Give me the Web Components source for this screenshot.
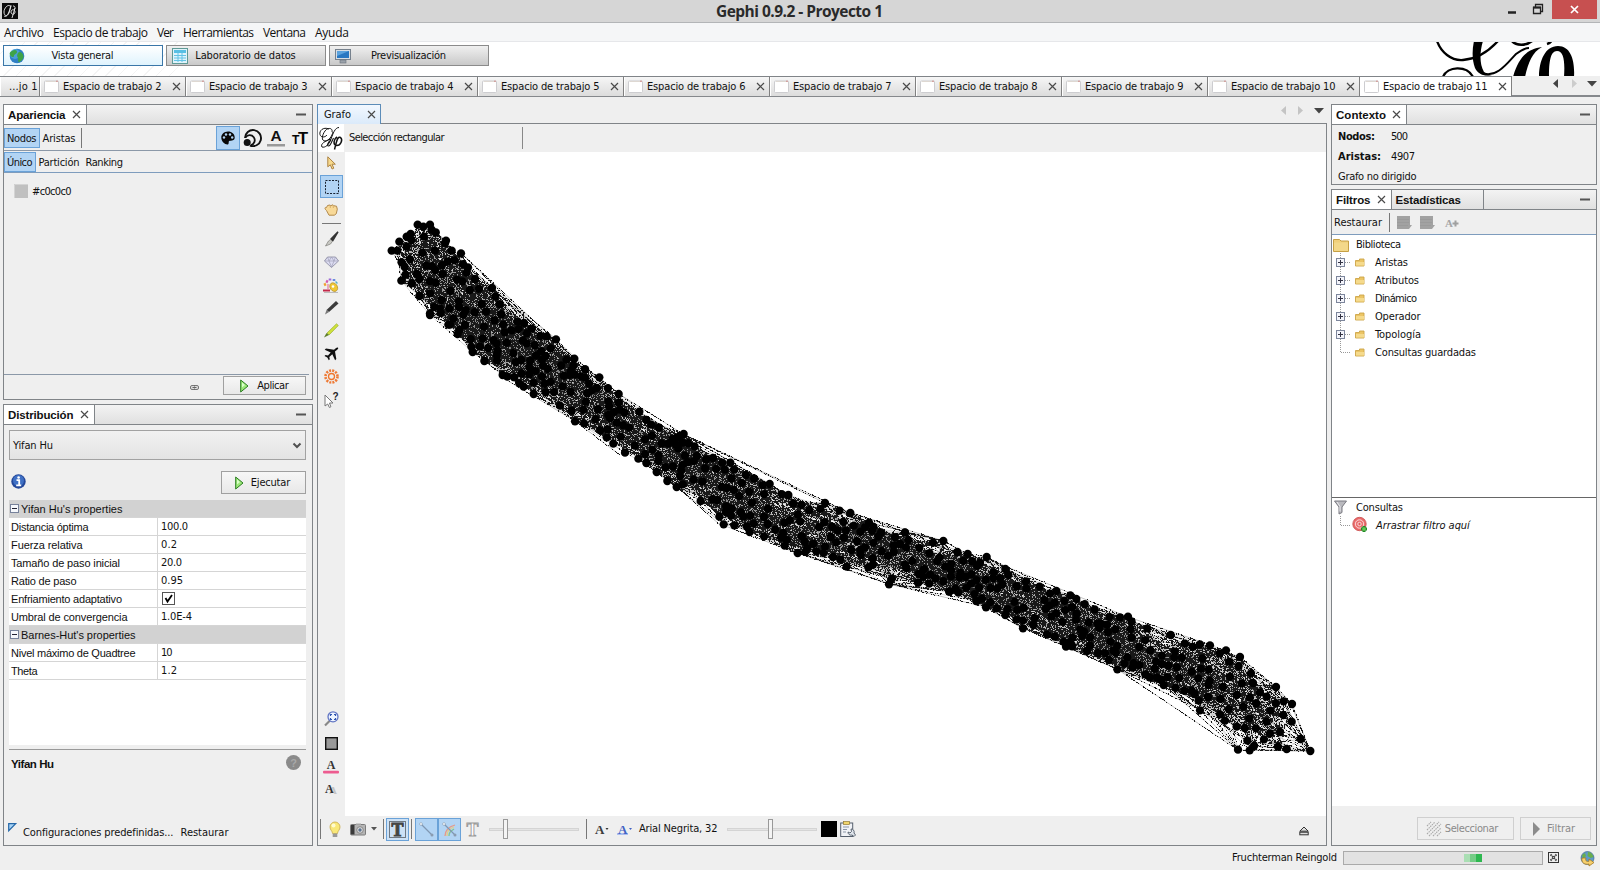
<!DOCTYPE html>
<html lang="es">
<head>
<meta charset="utf-8">
<title>Gephi 0.9.2 - Proyecto 1</title>
<style>
html,body{margin:0;padding:0;width:1600px;height:870px;overflow:hidden;background:#efefef}
</style>
</head>
<body>
<gephi-app></gephi-app>
<script>
const FONTS={
  t:'11px "DejaVu Sans Condensed","DejaVu Sans",sans-serif',
  tb:'bold 11px "DejaVu Sans Condensed","DejaVu Sans",sans-serif',
  ti:'italic 11px "DejaVu Sans Condensed","DejaVu Sans",sans-serif',
  s:'12px "Open Sans","Noto Sans",sans-serif',
  sb:'700 15.5px "Open Sans","Noto Sans",sans-serif',
  a:'11px "Liberation Sans",Arial,sans-serif',
  ab:'bold 11.5px "Liberation Sans",Arial,sans-serif'
};
const ruler=document.createElement('canvas').getContext('2d');
const define=(name,css,html,extra)=>{
  const t=document.createElement('template');
  t.innerHTML=`<style>:host{display:block;box-sizing:border-box}*{box-sizing:border-box}${css}</style>${html}`;
  customElements.define(name,class extends HTMLElement{
    constructor(){super();this.attachShadow({mode:'open'}).append(t.content.cloneNode(true));}
    connectedCallback(){if(extra)extra(this,this.shadowRoot);}
  });
};

/* Label whose tracking is tuned so that it occupies w pixels. */
define('ui-text',':host{display:block;white-space:pre;line-height:14px;color:#111;flex:none}','<slot></slot>',(h)=>{
  const f=FONTS[h.getAttribute('f')||'t'],s=h.textContent,w=+h.getAttribute('w');
  h.style.font=f;h.style.lineHeight=h.getAttribute('lh')||'14px';
  if(w){ruler.font=f;h.style.letterSpacing=((w-ruler.measureText(s).width)/(s.length-1||1)).toFixed(3)+'px';h.style.width=w+1+'px';}
});

const ICONS={
  app:[16,16,`<rect width="16" height="16" fill="#0c0c0c"/><path d="M8 3C6 1 2 5 2 9s3 5 5 1l2-7M2 13c3 2 5-3 7-11M9 9c0-3 4-3 4 0s-4 3-4 0M13 5l-3 10M11 3c3 0 2 3 1 4" fill="none" stroke="#eee" stroke-width=".9"/>`],
  logo:[25,25,`<path d="M13 6c1-4-4-5-7-1S2 15 6 15c4 0 7-5 8-9M10 3C4 .5 0 5 1 8.500s5 3 7 .5M20 1.500c-4 0-6 6-8 11.500-2 6-6 9-9 8-2-3 3-6 9-8" fill="none" stroke="#111" stroke-width="1"/><path d="M14.500 12c-2.500 5-3 8-5 8s-.5-4 2.500-6" fill="none" stroke="#111" stroke-width="1.100"/><path d="M18 11c-3.500 2-4 7.500-1 8.500 5 .5 7-6 4.500-8-3-1.500-4 4-6 12" fill="none" stroke="#111" stroke-width="1.500"/>`],
  globe:[16,16,`<circle cx="8" cy="8" r="7.300" fill="#2f7fc4"/><circle cx="6" cy="6" r="5" fill="#5db2e8" opacity=".6"/><path d="M3 3c3-2 5-1 5 1s-3 2-3 4-3 1-4-1 0-3 2-4zM10 4c3 0 4 2 4.500 4s-2 5-4 6-1-4-2-5 0-4 1.500-5z" fill="#3ea347"/>`],
  table:[16,16,`<rect x=".5" y=".5" width="15" height="15" fill="#dff3fb" stroke="#5f9a96"/><rect x="2" y="2" width="12" height="3" fill="#58bfe4"/><path d="M2 7.500h12M2 10h12M2 12.500h12M6 5v9M10 5v9" stroke="#63c3e6"/>`],
  monitor:[16,16,`<rect x=".5" y="1.500" width="15" height="10" fill="#d7dde4" stroke="#76818d"/><rect x="2" y="3" width="12" height="7" fill="#2877c2"/><path d="M2 3h12l-12 5z" fill="#5ba2dd"/><rect x="5" y="12" width="6" height="3" fill="#9aa2aa" stroke="#68717b" stroke-width=".6"/>`],
  doc:[15,13,`<rect x=".5" y="1" width="14" height="11.500" rx="1" fill="#fff" stroke="#cdcdd0"/><path d="M2 1.500h11" stroke="#ded8d2"/><path d="M12 1.200h2" stroke="#c88"/>`],
  x:[9,9,`<path d="M1 1l7 7M8 1l-7 7" stroke="#4a4a4a" stroke-width="1.200" fill="none"/>`],
  min:[10,3,`<rect y=".5" width="10" height="2" fill="#555"/>`],
  left:[5,9,`<path d="M5 0v9L0 4.500z" fill="currentColor"/>`],
  right:[5,9,`<path d="M0 0v9l5-4.500z" fill="currentColor"/>`],
  down:[10,6,`<path d="M0 0h10L5 5.500z" fill="currentColor"/>`],
  sdown:[6,4,`<path d="M0 0h6L3 3.500z" fill="#555"/>`],
  palette:[14,14,`<path d="M7 .5C3 .5.300 3.300.300 6.500c0 4 3.500 7 6 7 1.800 0 1.200-2 1.500-3 .5-1.600 5.900.500 5.900-4C13.700 3 10.800.500 7 .500z" fill="#080808"/><g fill="#b2d4f4"><circle cx="3" cy="6.500" r="1.200"/><circle cx="5" cy="3.500" r="1.200"/><circle cx="9" cy="3.500" r="1.200"/><circle cx="11.200" cy="6.500" r="1.200"/></g>`],
  circles:[18,18,`<path d="M2 9a8 8 0 1 1 5 7.500" fill="none" stroke="#111" stroke-width="1.900"/><path d="M2.500 8.500a5 5 0 1 1 5.500 7.500" fill="none" stroke="#111" stroke-width="1.800"/><circle cx="4.200" cy="13.500" r="3.500" fill="#111"/>`],
  acolor:[18,18,`<text x="9" y="12" text-anchor="middle" font-family="Liberation Sans" font-weight="bold" font-size="15.500" fill="#111">A</text><rect y="15" width="18" height="2.500" fill="#999"/>`],
  tt:[17,14,`<text x="0" y="12.500" font-family="Liberation Sans" font-weight="bold" font-size="12" fill="#050505">T</text><text x="6" y="12.500" font-family="Liberation Sans" font-weight="bold" font-size="16.500" fill="#050505">T</text>`],
  swatch:[14,14,`<rect width="14" height="14" fill="#c0c0c0"/><path d="M.5 14V.5H14" stroke="#d4d4d4" fill="none"/>`],
  chain:[9,5,`<rect x=".5" y=".5" width="8" height="4" rx="1.500" fill="#ddd" stroke="#777"/><path d="M2.500 2.500h4M4.500 .5v1M4.500 3.500v1" stroke="#666"/>`],
  play:[9,14,`<path d="M.7 1v12L8 7z" fill="#9be878" stroke="#2b7d20"/><path d="M2 3.500v5L5 6z" fill="#d9ffc9"/>`],
  gplay:[9,14,`<path d="M1 0v14l7-7z" fill="#8c8c8c"/>`],
  chev:[8,7,`<path d="M.5 1.500L4 5l3.500-3.500" fill="none" stroke="#505050" stroke-width="2"/>`],
  info:[15,15,`<circle cx="7.500" cy="7.500" r="7.200" fill="#24489a"/><circle cx="7.500" cy="6.500" r="5.500" fill="#3f70c4"/><path d="M5.500 6.200h2.700v5M5.200 11.400h5" stroke="#fff" stroke-width="1.800" fill="none"/><circle cx="7.600" cy="3.500" r="1.300" fill="#fff"/>`],
  help:[15,15,`<circle cx="7.500" cy="7.500" r="7.500" fill="#8a8a8a"/><text x="7.500" y="11.500" text-anchor="middle" font-family="Liberation Sans" font-weight="bold" font-size="11" fill="#a8a8a8">?</text>`],
  tri:[9,9,`<path d="M.7.700h7l-7 7z" fill="#a9d4f7" stroke="#2467a8" stroke-width="1.200"/>`],
  minus:[9,9,`<rect x=".5" y=".5" width="8" height="8" fill="#f6f8fc" stroke="#77829b"/><path d="M2 4.500h5" stroke="#223"/>`],
  plus:[9,9,`<rect x=".5" y=".5" width="8" height="8" fill="#f3f4fa" stroke="#7d869c"/><path d="M2 4.500h5M4.500 2v5" stroke="#334"/>`],
  check:[13,13,`<rect x=".5" y=".5" width="12" height="12" fill="#fff" stroke="#555"/><path d="M3.500 6l2 3.500L10 3" fill="none" stroke="#000" stroke-width="1.800"/>`],
  arrow:[9,14,`<path d="M.8.800v10l2.500-2 1.800 4.200 1.700-.8L5 8.200h3.300z" fill="#f7d98d" stroke="#ad8444"/>`],
  rect:[14,14,`<rect x=".5" y=".5" width="13" height="13" fill="none" stroke="#182230" stroke-dasharray="2 1.250"/>`],
  hand:[14,12,`<path d="M2.500 6.500C.5 5 .5 3 2.500 3.500L3.500 1.500 6 1l.8.7L9 .8l1 1 2.500.4 .8 3-1 4.500-2 1.500H5z" fill="#f8d998" stroke="#b38a4c"/><path d="M6.300 2v2M9.300 2v2" stroke="#c99e57" stroke-width=".7"/>`],
  brush:[15,16,`<path d="M14 .8L7 8l1.800 1.600z" fill="#333" stroke="#333" stroke-width="1.400"/><path d="M6.500 8.500l-2 1.500-3 5 5-2 1.800-2.500z" fill="#c9c9c4" stroke="#7c7c78" stroke-width=".7"/>`],
  gem:[15,12,`<path d="M3.500 1h8L14.500 5l-7 6.500-7-6.500z" fill="#dcdcf2" stroke="#85859c" stroke-width=".8"/><path d="M.5 5h14M3.500 1L5 5l2.500 6L10 5l1.500-4M5 5l2.500-4L10 5" fill="none" stroke="#a0a0b8" stroke-width=".7"/>`],
  paint:[16,16,`<g stroke-width="2.600" fill="none"><path d="M1 8l2-1" stroke="#f0a030"/><path d="M3 4l2 1" stroke="#d25bb0"/><path d="M7 1.500v2" stroke="#9e6ad8"/><path d="M11 2v2" stroke="#6a8ce0"/><path d="M14 5l-1 1" stroke="#58b0c8"/></g><ellipse cx="10.500" cy="10.500" rx="3.600" ry="4.600" transform="rotate(-35 10 10)" fill="#f0c733" stroke="#b2902e" stroke-width=".7"/><circle cx="10" cy="9.500" r="1.300" fill="#fff"/><path d="M5 7v5" stroke="#e88fb0" stroke-width="1.500"/><path d="M0 13.500h7" stroke="#c22849" stroke-width="2"/><path d="M1 15.500h14" stroke="#bbb"/>`],
  pencil:[15,16,`<path d="M12 1l2.500 2.500L5 12l-2.500-2z" fill="#3c3c3c"/><path d="M2.500 10L1 14.500 5 12z" fill="#777"/>`],
  hl:[16,16,`<path d="M13.500 .8L15.300 2.500 6 12l-2-2z" fill="#cfe23c" stroke="#8da21c" stroke-width=".6"/><path d="M3.500 10L1 14.500 6 12z" fill="#5d7e2a"/>`],
  plane:[15,14,`<path d="M14 .7c-1-.8-2.500.6-4 2L2 1.500.7 2.700l6 2.800L4 8.500 1.500 8l-1 1 2.800 1.500 1.500 2.800 1-1-.5-2.300 3-2.800 2.800 6 1.200-1.200L11 4.500c1.500-1.500 4-3 3-3.800z" fill="#111"/>`],
  sun:[15,15,`<circle cx="7.500" cy="7.500" r="3" fill="none" stroke="#f0762c" stroke-width="1.300"/><circle cx="7.500" cy="7.500" r="6" fill="none" stroke="#ee7a35" stroke-width="2.600" stroke-dasharray="2 1.140"/>`],
  ask:[15,16,`<path d="M1 3v11l2.700-2 1.700 3.500 1.500-.7L5.500 11H9z" fill="#fff" stroke="#777"/><text x="8.500" y="8" font-family="Liberation Sans" font-weight="bold" font-size="10" fill="#222">?</text>`],
  mag:[15,16,`<path d="M6.500 9l-5.500 5.500" stroke="#888" stroke-width="2.200"/><circle cx="9" cy="5.800" r="5" fill="#eef4ff" stroke="#6276c4" stroke-width="1.300"/><path d="M6.500 5V3.500h1.500M10 3.500h1.500V5M11.500 7v1.500H10M8 8.500H6.500V7" fill="none" stroke="#2f55b0" stroke-width="1.200"/>`],
  gray:[13,13,`<rect x=".7" y=".7" width="11.600" height="11.600" fill="#999" stroke="#111" stroke-width="1.400"/>`],
  apink:[16,14,`<text x="8" y="9" text-anchor="middle" font-family="Liberation Serif" font-weight="bold" font-size="12" fill="#333">A</text><rect x="0" y="10.800" width="16" height="2.700" rx="1" fill="#ed5c90"/>`],
  ash:[13,12,`<text x="4" y="10" font-family="Liberation Serif" font-weight="bold" font-size="11" fill="#c4c4c4">A</text><text x="0" y="9" font-family="Liberation Serif" font-weight="bold" font-size="12" fill="#333">A</text>`],
  bulb:[12,17,`<path d="M6 1a5 5 0 0 0-5 5c0 3 2.500 4 2.500 6.500h5C8.500 10 11 9 11 6a5 5 0 0 0-5-5z" fill="#f9e878" stroke="#c8a94a" stroke-width=".8"/><circle cx="4.500" cy="4.500" r="2" fill="#fffbd0"/><rect x="3.700" y="12.500" width="4.600" height="3.500" fill="#999"/>`],
  cam:[16,13,`<rect x=".5" y="1.500" width="15" height="10.500" rx="1" fill="#b5b5b5" stroke="#7c7c7c"/><rect x="1" y="2" width="3.500" height="9.500" fill="#3a3a3a"/><circle cx="10" cy="7" r="3.300" fill="#ddd" stroke="#888"/><circle cx="10" cy="7" r="1.700" fill="#5c7390"/><rect x="6" y="0" width="5" height="1.500" fill="#ccc"/>`],
  bigT:[17,17,`<rect x=".5" y=".5" width="16" height="16" fill="#cde1f5" stroke="#111" stroke-dasharray="1 1"/><text x="8.500" y="14.500" text-anchor="middle" font-family="Liberation Serif" font-weight="bold" font-size="18" fill="#444" stroke="#444">T</text>`],
  edge:[15,15,`<path d="M2 2l11 11" stroke="#8097b2" stroke-width="1.200"/><circle cx="2" cy="2" r="1.400" fill="#fff" stroke="#7e93ab" stroke-width=".6"/><circle cx="13" cy="13" r="1.500" fill="#8a9bb0"/>`],
  edgec:[15,15,`<path d="M3 14c0-5 3-9 10-11" stroke="#e59a8c" stroke-width="1.300" fill="none"/><path d="M5 14c0-5 2-7 7-9" stroke="#e3cf86" stroke-width="1.300" fill="none"/><path d="M7 14c0-4 2-5 5-7" stroke="#7fc596" stroke-width="1.300" fill="none"/><path d="M2 2l11 11" stroke="#8097b2" stroke-width="1.200"/><circle cx="2" cy="2" r="1.400" fill="#fff" stroke="#7e93ab" stroke-width=".6"/><circle cx="13" cy="13" r="1.500" fill="#8a9bb0"/>`],
  outT:[15,17,`<text x="7.500" y="14.500" text-anchor="middle" font-family="Liberation Serif" font-weight="bold" font-size="18" fill="#fff" stroke="#9b9b9b" stroke-width=".9">T</text>`],
  aBlk:[14,15,`<text x="0" y="12" font-family="Liberation Serif" font-weight="bold" font-size="13" fill="#3c3c3c">A</text><path d="M10.500 6h3l-1.500 2z" fill="#333"/>`],
  aBlu:[16,15,`<rect x="0" y="11" width="11" height="2" fill="#a9bdf0"/><text x="1" y="12" font-family="Liberation Serif" font-weight="bold" font-size="13" fill="#4263c4">A</text><path d="M12 6h3l-1.500 2z" fill="#4263c4"/>`],
  clip:[16,17,`<rect x=".7" y="2" width="12" height="13.500" fill="#f0f2f6" stroke="#555f6d"/><rect x="3.500" y=".6" width="6" height="3" fill="#f0d56c" stroke="#937b33" stroke-width=".7"/><path d="M3 6h6M3 8.500h4M3 11h3" stroke="#8c97a6"/><path d="M11 8a3 3 0 0 1 3 4l1.500 2-1.500 1.500-2-1.500a3 3 0 0 1-4-3l2 1 1.500-1.500z" fill="#dfe5ec" stroke="#4f5966" stroke-width=".9"/>`],
  eject:[10,10,`<path d="M5 1l4.200 4.200H.8z" fill="#ddd" stroke="#333"/><rect x=".8" y="6.200" width="8.400" height="2.600" fill="#ddd" stroke="#333"/>`],
  fold:[16,14,`<path d="M.5 1.500h6l1.500 1.500h7.500v10.500H.5z" fill="#f0cf7b" stroke="#c6a044"/><path d="M1 4.500h14v8.500H1z" fill="#f3d88a"/>`],
  sfold:[10,9,`<path d="M.5 2.500h4v-1.500h4.500v7H.5z" fill="#ecc565" stroke="#cda548" stroke-width=".9"/><path d="M1 4h8v3.500H1z" fill="#f5da8c"/>`],
  funnel:[13,15,`<path d="M.5 1h12L8 7v5.500L5 14V7z" fill="#b9b9be" stroke="#7b7b82"/><path d="M3 2l3 4.500v5" stroke="#ececf0" fill="none"/>`],
  target:[16,16,`<circle cx="7.500" cy="7" r="6.700" fill="#ea6a6a" stroke="#c94b4b" stroke-width=".8"/><circle cx="7.500" cy="7" r="4.200" fill="#ea7070" stroke="#fbe3e3" stroke-width=".9"/><circle cx="7.500" cy="7" r="1.700" fill="#e05a5a" stroke="#fbe3e3" stroke-width=".9"/><path d="M12 9v6M9 12h6" stroke="#208c24" stroke-width="3"/><path d="M12 10v4M10 12h4" stroke="#7ddc6a" stroke-width="1"/>`],
  blk1:[16,14,`<path d="M0 0h13v9h2l-3 4H0z" fill="#a2a2a2"/><path d="M0 3.500h12M0 6.500h12M0 9.500h11" stroke="#979797" stroke-width=".6"/>`],
  aplus:[14,12,`<text x="0" y="10" font-family="Liberation Serif" font-weight="bold" font-size="11" fill="#a5a5a5">A</text><path d="M10.500 3.500v6M7.500 6.500h6" stroke="#a0a0a0" stroke-width="2"/>`],
  hatch:[14,14,`<path d="M0 4l4-4M0 8l8-8M0 12l12-12M2 14L14 2M6 14l8-8M10 14l4-4" stroke="#a9a9a9" stroke-width="1.100" stroke-dasharray="1.500 .8"/>`],
  cancel:[11,11,`<rect x=".5" y=".5" width="10" height="10" fill="#eee" stroke="#333"/><path d="M2.500 2.500l6 6M8.500 2.500l-6 6" stroke="#444" stroke-width="1.800" stroke-dasharray="1.600 .7"/>`],
  world:[15,16,`<circle cx="7.500" cy="7" r="6.500" fill="#5e9ac8" stroke="#41688c" stroke-width=".7"/><path d="M8 1c3 0 5 3 5.500 5l-3 1-3-2zM2 4l3-2 1 3-3 3z" fill="#69ae4d"/><path d="M2 7c-1 5 3 7 7 6v2l5-3.500-5-3.500v2.200C6 11 5 9 6 7z" fill="#f6cf6d" stroke="#a57a26" stroke-width=".8"/>`],
  brand:[140,34,`<g transform="translate(-1435 -42)" fill="none" stroke="#000"><path d="M1437 41c4 11 14 20 26 19 14-1 25-8 35-19" stroke-width="2.300"/><path d="M1474 41h9c-3 10-4 22 1 31 2 2 5 3 8 3-8 2-14-1-17-7-3-8-3-18-1-27z" fill="#000" stroke="none"/><path d="M1482 73c15 6 27-12 34-19 4-3 8-6 13-6" stroke-width="2"/><path d="M1512 41c4 5 14 5 20 0M1547 44c3-1 4-2 5-4" stroke-width="2.600"/><path d="M1443 77c4-11 24-12 30 0" stroke-width="2.300"/><path d="M1542 47c-14 2-23 9-29 30h12c3-13 7-25 17-30z" fill="#000" stroke="none"/><path d="M1539 77c0-16 6-31 19-31 13 0 17 15 16 31h-10c1-15 0-26-7-26s-8 12-8 26z" fill="#000" stroke="none"/></g>`]
};
define('ui-icon',':host{display:block;flex:none}svg{display:block;overflow:visible}','<div></div>',(h,r)=>{
  const [w,hh,s]=ICONS[h.getAttribute('n')];
  r.querySelector('div').innerHTML=`<svg width="${w}" height="${hh}" viewBox="0 0 ${w} ${hh}">${s}</svg>`;
});

define('window-title',`:host{height:23px;background:#d6d6d6;border-bottom:1px solid #b3b5b7;display:grid;grid-template-columns:1fr auto 1fr;align-items:center;padding:0 2px}
 .c{display:flex;justify-content:flex-end;align-self:start;height:19px;align-items:center}
 .close{width:45px;height:19px;background:#c75050;display:grid;place-items:center;margin-right:1px}svg{display:block}`,
`<ui-icon n="app"></ui-icon><ui-text f="sb" w="167" lh="22px" style="color:#2a2a2a">Gephi 0.9.2 - Proyecto 1</ui-text><div class="c">
<svg width="60" height="19"><path d="M16 12.500h8" stroke="#222" stroke-width="2.500"/><path d="M41.500 7.500h7v6h-7zM43.500 7v-2.500h7v7h-2" fill="none" stroke="#222" stroke-width="1.300"/><path d="M41 7.500h8" stroke="#222" stroke-width="2"/></svg>
<div class="close"><svg width="9" height="9"><path d="M1 1l7 7M8 1l-7 7" stroke="#fff" stroke-width="1.700"/></svg></div></div>`);

define('menu-bar',':host{height:19px;background:#f5f6f7;border-bottom:1px solid #e6e7ea;display:flex;gap:8px;padding:2px 4px 0;align-items:center}',
`<ui-text f="s" w="40">Archivo</ui-text><ui-text f="s" w="95">Espacio de trabajo</ui-text><ui-text f="s" w="17">Ver</ui-text><ui-text f="s" w="71">Herramientas</ui-text><ui-text f="s" w="43">Ventana</ui-text><ui-text f="s" w="34">Ayuda</ui-text>`);

define('mode-button',`:host{width:160px;height:21px;border:1px solid #8b8b8b;background:linear-gradient(#f0f0f0,#c9c9c9);display:flex;align-items:center;padding-left:5px}
 :host([on]){border-color:#3a76a8;background:linear-gradient(#fff,#dff3fd)} .c{flex:1;display:flex;justify-content:center;padding-right:21px}`,
 `<span class="i"></span><div class="c"><slot></slot></div>`,
 (h,r)=>{r.querySelector('.i').innerHTML=`<ui-icon n="${h.getAttribute('icon')}"></ui-icon>`;});

define('mode-bar',`:host{height:34px;display:flex;gap:3px;padding:3px 25px 0 3px;background:repeating-linear-gradient(135deg,transparent 0 8px,#f4f4f4 8px 9px) 0 0/180px 34px no-repeat,#fff}
 .fade{margin-left:auto;margin-top:-3px;height:34px;overflow:hidden}`,
`<mode-button on icon="globe"><ui-text w="62">Vista general</ui-text></mode-button><mode-button icon="table"><ui-text w="100.500">Laboratorio de datos</ui-text></mode-button><mode-button icon="monitor"><ui-text w="75">Previsualización</ui-text></mode-button><ui-icon class="fade" n="brand"></ui-icon>`);

define('workspace-tab',`:host{height:19px;width:146px;flex:none;display:flex;align-items:center;border-right:1px solid #808080;background:linear-gradient(#f6f6f6,#dcdcdc);padding-left:4px;box-shadow:inset 1px 0 #fff}
 :host([wide]){width:152px}:host([on]){background:#fff}:host([cut]){width:40px;padding-left:9px;overflow:hidden}:host([cut]) ui-icon{display:none}
 ui-text{margin-left:4px;margin-right:9.500px}:host([cut]) ui-text{margin-left:0}`,
`<ui-icon n="doc"></ui-icon><slot></slot><ui-icon n="x"></ui-icon>`,
(h,r)=>{const t=document.createElement('ui-text');t.textContent=h.getAttribute('label');t.setAttribute('w',h.getAttribute('w')||98.5);r.querySelector('slot').replaceWith(t);});

define('workspace-tabs',`:host{height:21px;display:flex;border-top:1px solid #808488;border-bottom:2px solid #85888c;background:#efefef}
 .nav{flex:1;margin-top:-1px;background:#efefef;display:flex;align-items:center;height:15px;padding-left:41px;color:#444}.nav ui-icon+ui-icon{margin-left:14px}.nav .d{color:#ccc}.nav .d+ui-icon{margin-left:10px}`,
`<workspace-tab cut label="...jo 1" w="28.500"></workspace-tab>${[2,3,4,5,6,7,8,9].map(i=>`<workspace-tab label="Espacio de trabajo ${i}"></workspace-tab>`).join('')}<workspace-tab wide label="Espacio de trabajo 10" w="104.500"></workspace-tab><workspace-tab wide on label="Espacio de trabajo 11" w="104.500"></workspace-tab><div class="nav"><ui-icon n="left"></ui-icon><ui-icon class="d" n="right"></ui-icon><ui-icon n="down"></ui-icon></div>`);

define('dock-panel',`:host{display:flex;flex-direction:column;border:1px solid #808488;background:#efefef;min-height:0}
 header{height:20px;flex:none;display:flex;border-bottom:1px solid #808488;background:linear-gradient(#f3f3f3,#e0e0e0);padding-right:6px}
 .m{margin-left:auto;align-self:center}.b{flex:1;display:flex;flex-direction:column;min-height:0}`,
`<header><slot name="tab"></slot><ui-icon class="m" n="min"></ui-icon></header><div class="b"><slot></slot></div>`);
define('dock-tab',`:host{display:flex;height:19px;align-items:center;gap:5px;padding:1px 5px 0 4px;border-right:1px solid #808488;background:#fff}:host([off]){background:none}:host([off]) ui-icon{display:none}ui-icon{margin-top:-1px}`,`<slot></slot><ui-icon n="x"></ui-icon>`);
define('push-button',`:host{display:flex;align-items:center;justify-content:center;gap:7px;border:1px solid #a0a0a0;background:linear-gradient(#f7f7f7,#e8e8e8)}:host([off]){border-color:#cfcfcf;background:#efefef}`,`<slot></slot>`);
define('tab-chip',`:host{display:flex;align-items:center;justify-content:center;height:20px;padding:1px 1px 0 2px;border:1px solid transparent}:host([on]){background:#b2d4f4;border-color:#6aa2d8}`,`<slot></slot>`);

define('appearance-panel',`:host{display:block}dock-panel{height:100%}
 .r{display:flex;align-items:center;border-bottom:1px solid #8b98a8;flex:none}.r1{height:26px;padding:1px 3px 0 0}.r2{height:22px;border-color:#7e9cbd;padding-top:1px}
 .sep{width:1px;height:20px;background:#777;margin-left:2px}.icons{margin-left:auto;display:flex;align-items:center}
 .pal{width:24px;height:24px;display:grid;place-items:center;background:#b2d4f4;border:1px solid #6aa2d8;margin-right:3px}
 .body{height:202px;flex:none;padding:11px 10px;display:flex;gap:4px;border-bottom:1px solid #8b98a8;margin-right:3px}.body ui-text{margin-top:1px}
 .foot{flex:1;display:flex;align-items:center;justify-content:flex-end;padding-right:6px;gap:24px}.foot push-button{width:83px;height:19px;margin-top:-3px;padding-left:1px;gap:8px}`,
`<dock-panel><dock-tab slot="tab"><ui-text f="ab" w="57.500">Apariencia</ui-text></dock-tab>
<div class="r r1"><tab-chip on><ui-text w="29.500">Nodos</ui-text></tab-chip><tab-chip><ui-text w="33">Aristas</ui-text></tab-chip><span class="sep"></span><div class="icons"><div class="pal"><ui-icon n="palette"></ui-icon></div><ui-icon n="circles"></ui-icon><ui-icon n="acolor" style="margin-left:6px"></ui-icon><ui-icon n="tt" style="margin-left:7px"></ui-icon></div></div>
<div class="r r2"><tab-chip on><ui-text w="25.500">Único</ui-text></tab-chip><tab-chip><ui-text w="41">Partición</ui-text></tab-chip><tab-chip><ui-text w="37.500">Ranking</ui-text></tab-chip></div>
<div class="body"><ui-icon n="swatch"></ui-icon><ui-text w="39.500">#c0c0c0</ui-text></div>
<div class="foot"><ui-icon n="chain"></ui-icon><push-button><ui-icon n="play"></ui-icon><ui-text w="31.500">Aplicar</ui-text></push-button></div></dock-panel>`);

define('prop-row',`:host{height:18px;display:grid;grid-template-columns:149px 1fr;border-bottom:1px solid #d5d5d5;background:#fff}
 :host([head]){background:#d2d2d2;display:flex;align-items:center;gap:2px;padding-left:1px}
 .l{border-right:1px solid #d5d5d5;padding:2px 0 0 2px}.v{padding:1px 0 0 3px;display:flex;align-items:center}`,`<slot></slot>`,
(h,r)=>{const s=r.querySelector('slot'),a=n=>h.getAttribute(n);
 const d=document.createElement('template');
 d.innerHTML=h.hasAttribute('head')?`<ui-icon n="minus"></ui-icon><ui-text f="a" w="${a('w')}">${a('label')}</ui-text>`:
 `<div class="l"><ui-text f="a" w="${a('w')}">${a('label')}</ui-text></div><div class="v">${a('value')?`<ui-text w="${a('vw')}">${a('value')}</ui-text>`:'<ui-icon n="check" style="margin-top:-2px;margin-left:1px"></ui-icon>'}</div>`;
 s.replaceWith(d.content);});

define('layout-panel',`:host{display:block}dock-panel{height:100%}
 .in{flex:1;display:flex;flex-direction:column;padding:5px 6px 0 5px}
 .combo{height:30px;flex:none;border:1px solid #a2a2a2;background:linear-gradient(#f1f1f1,#e3e3e3);display:flex;align-items:center;justify-content:space-between;padding:1px 4px 0 3px}
 .run{height:40px;flex:none;display:flex;justify-content:space-between;padding:11px 0 0 2px}.run push-button{width:85px;height:23px;padding-right:1px}.run>ui-icon{margin-top:3px}
 .t{height:245px;background:#fff;flex:none}
 .d{border-top:1px solid #999;margin-top:4px;padding:7px 5px 0 2px;display:flex;justify-content:space-between;height:72px;flex:none}.d ui-icon{margin-top:-2px}
 .f{display:flex;gap:6px;margin-left:-2px}.f ui-text{margin-top:5px}`,
`<dock-panel><dock-tab slot="tab"><ui-text f="ab" w="65.500">Distribución</ui-text></dock-tab><div class="in">
<div class="combo"><ui-text w="40">Yifan Hu</ui-text><ui-icon n="chev"></ui-icon></div>
<div class="run"><ui-icon n="info"></ui-icon><push-button><ui-icon n="play"></ui-icon><ui-text w="39.500">Ejecutar</ui-text></push-button></div>
<div class="t"><prop-row head label="Yifan Hu's properties" w="101.500"></prop-row><prop-row label="Distancia óptima" w="77.500" value="100.0" vw="27"></prop-row><prop-row label="Fuerza relativa" w="71.500" value="0.2" vw="16"></prop-row><prop-row label="Tamaño de paso inicial" w="109" value="20.0" vw="21"></prop-row><prop-row label="Ratio de paso" w="65.500" value="0.95" vw="22"></prop-row><prop-row label="Enfriamiento adaptativo" w="111" value=""></prop-row><prop-row label="Umbral de convergencia" w="116.500" value="1.0E-4" vw="31"></prop-row><prop-row head label="Barnes-Hut's properties" w="114.500"></prop-row><prop-row label="Nivel máximo de Quadtree" w="124.500" value="10" vw="11.500"></prop-row><prop-row label="Theta" w="26.500" value="1.2" vw="16"></prop-row></div>
<div class="d"><ui-text f="ab" w="43">Yifan Hu</ui-text><ui-icon n="help"></ui-icon></div>
<div class="f"><ui-icon n="tri" style="margin:2px 0 0 1px"></ui-icon><ui-text w="150.500">Configuraciones predefinidas...</ui-text><ui-text w="48">Restaurar</ui-text></div></div></dock-panel>`);

/* Network drawing: outline nodes are fixed, the inner ones are scattered between the two edges of the band. */
const at=(ox,oy,s)=>s.split(' ').map(p=>{const [x,y]=p.split(',');return [ox+x/3,oy+y/3]});
const UP=[...at(380,200,'64,242 74,201 35,152 58,125 92,102 113,74 150,74 198,122 243,160 264,202 285,237 336,264 346,290 432,369 500,409 528,418 583,476 658,532 716,582 778,635 836,682 911,702'),
 ...at(660,410,'159,144 211,158 258,195 329,222 385,255 495,279 571,309 627,338 735,368'),
 ...at(900,500,'15,97 99,128 130,123 172,156 203,162 260,171 316,207 378,244 419,260 469,273 511,286 584,328 660,352 684,350 742,385 812,405 855,431 900,433 930,436 978,451 1020,471 1053,520 1128,561 1151,604 1176,612 1175,665 1202,717 1231,753')];
const LOW=[...at(380,200,'118,288 150,340 205,374 233,402 278,456 313,483 368,525 431,560 461,582 540,617 585,664 612,670 680,712 700,731 735,758 775,776 799,789 830,816'),
 ...at(660,410,'22,213 50,231 122,273 178,320 191,343 223,346 269,366 374,407 413,429 519,441 560,470 625,472 687,523 774,518'),
 ...at(900,500,'148,275 229,303 258,322 316,345 369,385 464,410 498,440 561,453 627,480 652,508 749,532 791,555 853,572 900,631 960,643 975,662 1010,680 1042,722 1014,749 1049,751 1134,740 1160,747')];
const EXTRA=[...at(380,200,'52,152 382,530 497,577 461,548 132,110 80,110 80,140 127,158 95,250 150,280 180,325 208,325 237,305 255,375 300,440 350,465 350,430 440,430 512,445 440,400 150,345 90,178 165,152 195,130 130,80 210,374 274,440 270,270 165,210'),
 ...at(660,410,'469,424 695,507 495,410 250,320 215,295 720,402 400,280 448,300 745,390 735,463 187,158 60,78 50,82 380,390 640,350 895,548 950,573 868,545'),
 ...at(900,500,'240,188 55,248 290,325 1016,498 1059,549 1128,610 1112,632 1150,645 1092,718 1140,696 1062,738 1034,684 718,495 1080,577 1100,590 1068,610 1030,620 1048,655 1100,665 1068,685 1110,700 1010,585 990,530 960,460 988,485 1025,550 325,225 400,375 875,572 770,532')];
define('graph-canvas',':host{overflow:hidden;background:#fff}canvas{display:block}','<canvas width="981" height="664"></canvas>',(h,r)=>{
  const cv=r.querySelector('canvas'),g=cv.getContext('2d',{willReadFrequently:true});
  let seed=4907;const rnd=()=>{seed|=0;seed=seed+0x6D2B79F5|0;let t=Math.imul(seed^seed>>>15,1|seed);t=t+Math.imul(t^t>>>7,61|t)^t;return((t^t>>>14)>>>0)/4294967296};
  const poly=[...UP,...LOW.slice().reverse()];
  const inside=(x,y)=>{let c=false;for(let i=0,j=poly.length-1;i<poly.length;j=i++){const [a,b]=poly[i],[d,e]=poly[j];if((b>y)!==(e>y)&&x<(d-a)*(y-b)/(e-b)+a)c=!c}return c};
  const nodes=[...UP,...LOW,...EXTRA];
  let tries=0;
  while(nodes.length<530&&tries++<300000){const x=390+rnd()*870,y=225+rnd()*525;const m=x>1215?8:3+rnd()*4;
    if(inside(x,y)&&nodes.every(n=>Math.hypot(n[0]-x,n[1]-y)>m))nodes.push([x,y]);}
  g.setTransform(1,0,0,1,-345,-152);
  g.strokeStyle='rgba(0,0,0,.38)';g.lineWidth=.85;
  const line=(a,b)=>{g.beginPath();g.moveTo(a[0],a[1]);g.lineTo(b[0],b[1]);g.stroke()};
  const N=nodes.length;let k=0,guard=0;
  while(k<6000&&guard++<3e6){const a=nodes[rnd()*N|0],b=nodes[rnd()*N|0],d=Math.hypot(a[0]-b[0],a[1]-b[1]);
    if(a!==b&&d<25+rnd()*95){const mx=(a[0]+b[0])/2,my=(a[1]+b[1])/2;if(inside(mx,my)||inside(mx-4,my+8)||inside(mx+3,my-5)){line(a,b);k++}}}
  g.strokeStyle='rgba(0,0,0,.55)';
  const long='461,253,546,336 461,253,575,359 468,267,546,336 468,267,556,339 475,279,524,323 492,288,575,359 492,288,546,336 683,434,825,503 683,434,850,513 683,434,770,484 683,434,788,495 619,394,683,434 575,359,640,410 650,420,730,463 1117,669,1238,750 1117,669,1200,710 1117,669,1190,697 1117,669,1164,685 1164,685,1238,750 1200,710,1238,750 1200,710,1247,741 1200,710,1262,748 1291,704,1310,751 1276,687,1310,751 1292,721,1310,751 1310,751,1238,750 1310,751,1250,750 1310,751,1247,745 1301,739,1270,710 1310,751,1275,720 1310,751,1283,715 889,584,986,607 889,584,950,590 918,583,889,584 889,584,800,553 797,553,700,501 797,553,847,567 797,553,889,584 1023,628,1117,669 1066,647,1117,669 1023,628,1087,651 720,524,797,553 750,532,797,553 500,376,575,421 533,394,596,428 575,421,620,455 575,421,650,460 983,557,1128,617 944,541,1066,612 850,513,944,541 825,503,905,532 905,532,1004,567 1240,657,1276,687 1251,673,1292,704 1171,635,1240,657 1128,617,1214,646 1056,595,1171,635 677,487,719,524 677,487,723,524 701,501,750,532';
  for(const s of long.split(' ')){const [a,b,c,d]=s.split(',');line([+a,+b],[+c,+d])}
  /* Convert the tinted strokes to a one-pixel grain. */
  const im=g.getImageData(0,0,981,664),p=im.data;
  for(let i=0;i<p.length;i+=4){const a=p[i+3]/255;if(a>.02){const hit=rnd()<Math.min(.78,a*1.1);p[i]=p[i+1]=p[i+2]=0;p[i+3]=hit?230:a*130;}}
  g.putImageData(im,0,0);
  g.fillStyle='#000';for(const [x,y] of nodes){g.beginPath();g.arc(x,y,4.15,0,7);g.fill()}
});

define('tool-button',`:host{height:23px;width:23px;display:grid;place-items:center;flex:none}:host([on]){background:#b2d4f4;border:1px solid #6aa2d8}`,`<slot></slot>`);
define('slider-bar',`:host{width:90px;height:23px;flex:none;display:grid;align-items:center}i{grid-area:1/1;height:3px;background:#e4e4e4;border:1px solid #d4d4d4}b{grid-area:1/1;width:5px;height:20px;background:#f4f4f4;border:1px solid #999;margin-left:var(--p)}`,`<i></i><b></b>`);
define('graph-window',`:host{display:flex;flex-direction:column}
 .tabs{height:20px;flex:none;display:flex;border-bottom:1px solid #808488;align-items:center}
 .tab{width:64px;height:20px;border:1px solid #5c8cb8;border-bottom:0;background:linear-gradient(#f2f8ff,#dbeafa);margin-bottom:-1px;display:flex;align-items:center;justify-content:space-between;padding:0 4px 0 6px;flex:none}
 .nav{margin-left:auto;display:flex;gap:12px;align-items:center;color:#c4c4c4;padding:0 3px 6px 0}.nav .k{color:#444;margin-left:-1px}
 .box{flex:1;border:1px solid #808488;border-top:0;display:grid;grid-template:28px 1fr 29px/27px 1fr;min-height:0}
 .top{grid-column:1/3;display:flex;align-items:center;}.logo{background:#fff;width:26px;height:28px;padding:2px 1px}.top ui-text{margin-left:5px}.top i{height:22px;width:1px;background:#888;margin-left:76px}
 .tools{display:flex;flex-direction:column;align-items:flex-start;padding-left:2px}.tools tool-button ui-icon{margin-left:-1px}.tools hr{width:19px;height:1px;border:0;background:#777;margin:2px 0 3px 2px}.tools .g{flex:1}
 .bot{grid-column:1/3;display:flex;align-items:center;padding:1px 0 4px 2px}.bot .s{width:1px;height:20px;background:#777}`,
`<div class="tabs"><div class="tab"><ui-text w="27">Grafo</ui-text><ui-icon n="x"></ui-icon></div><div class="nav"><ui-icon n="left"></ui-icon><ui-icon n="right"></ui-icon><ui-icon class="k" n="down"></ui-icon></div></div>
<div class="box"><div class="top"><div class="logo"><ui-icon n="logo"></ui-icon></div><ui-text w="95.500">Selección rectangular</ui-text><i></i></div>
<div class="tools"><tool-button><ui-icon n="arrow" style="margin-top:-2px"></ui-icon></tool-button><tool-button on><ui-icon n="rect" style="margin-left:0"></ui-icon></tool-button><tool-button><ui-icon n="hand"></ui-icon></tool-button><hr>${['brush','gem','paint','pencil','hl','plane','sun','ask'].map(n=>`<tool-button><ui-icon n="${n}"></ui-icon></tool-button>`).join('')}<div class="g"></div>${['mag','gray','apink'].map(n=>`<tool-button style="height:24px"><ui-icon n="${n}"></ui-icon></tool-button>`).join('')}<tool-button style="height:21px"><ui-icon n="ash"></ui-icon></tool-button><div style="height:16px;flex:none"></div></div>
<graph-canvas></graph-canvas>
<div class="bot"><i class="s"></i><ui-icon n="bulb" style="margin-left:8px"></ui-icon><ui-icon n="cam" style="margin-left:9px"></ui-icon><ui-icon n="sdown" style="margin-left:5px"></ui-icon><i class="s" style="margin-left:6px"></i><tool-button on style="margin-left:2px;background:#cde1f5"><ui-icon n="bigT"></ui-icon></tool-button><i class="s" style="margin:0 3px 0 2px"></i><tool-button on><ui-icon n="edge"></ui-icon></tool-button><tool-button on><ui-icon n="edgec"></ui-icon></tool-button><ui-icon n="outT" style="margin-left:4px"></ui-icon><slider-bar style="--p:14px;margin-left:9px"></slider-bar><i class="s" style="margin-left:7px"></i><ui-icon n="aBlk" style="margin-left:8px"></ui-icon><ui-icon n="aBlu" style="margin-left:8px"></ui-icon><ui-text w="78.500" style="margin-left:6px">Arial Negrita, 32</ui-text><slider-bar style="--p:41px;margin-left:8px"></slider-bar><b style="width:16px;height:16px;background:#000;margin-left:4px"></b><ui-icon n="clip" style="margin-left:3px"></ui-icon><ui-icon n="eject" style="margin:3px 17px 0 auto"></ui-icon></div></div>`);

define('context-panel',`:host{display:block}dock-panel{height:100%}.b{padding:5px 6px;display:grid;grid-template-columns:53px 1fr;row-gap:6px}.b .w{grid-column:1/3}`,
`<dock-panel><dock-tab slot="tab"><ui-text f="ab" w="50">Contexto</ui-text></dock-tab><div class="b"><ui-text f="tb" w="37">Nodos:</ui-text><ui-text w="17">500</ui-text><ui-text f="tb" w="43">Aristas:</ui-text><ui-text w="24">4907</ui-text><ui-text class="w" w="78.500">Grafo no dirigido</ui-text></div></dock-panel>`);

define('tree-item',`:host{height:18px;display:flex;align-items:center;padding-left:4px}
 .k{width:9px;height:18px;display:grid;place-items:center;background:repeating-linear-gradient(#999 0 1px,transparent 1px 2px) 4px 0/1px 18px no-repeat}
 :host([last]) .k{background-size:1px 9px}:host([last]) .h{margin-left:-4px;width:10px}
 .h{width:6px;height:1px;background:repeating-linear-gradient(90deg,#999 0 1px,transparent 1px 2px);margin-right:4px}:host([last]) .k ui-icon{visibility:hidden}
 .c{display:flex;align-items:center;gap:10px}:host([big]) .c{gap:8px}:host([big]) .h{margin-right:1px}::slotted(ui-text){padding-top:1px}`,
`<span class="k"><ui-icon n="plus"></ui-icon></span><span class="h"></span><div class="c"><slot></slot></div>`);
define('filters-panel',`:host{display:block;min-height:0}dock-panel{height:100%}
 .bar{height:25px;flex:none;display:flex;align-items:center;padding:1px 0 0 2px;border-bottom:1px solid #7e9cbd}.bar i{width:1px;height:19px;background:#777;margin:0 7px 0 6px}
 .tree{background:#fff;height:263px;flex:none;border-bottom:1px solid #666}.q{background:#fff;flex:1}.root{height:18px;display:flex;align-items:center;gap:7px;padding:1px 0 0 1px}
 .foot{height:39px;flex:none;display:flex;justify-content:flex-end;gap:6px;padding:11px 5px 5px 0}`,
`<dock-panel><dock-tab slot="tab"><ui-text f="ab" w="34.500">Filtros</ui-text></dock-tab><dock-tab slot="tab" off><ui-text f="ab" w="65.500" style="margin-right:16px">Estadísticas</ui-text></dock-tab>
<div class="bar"><ui-text w="48">Restaurar</ui-text><i></i><ui-icon n="blk1"></ui-icon><ui-icon n="blk1" style="margin-left:7px"></ui-icon><ui-icon n="aplus" style="margin-left:9px"></ui-icon></div>
<div class="tree"><div class="root"><ui-icon n="fold"></ui-icon><ui-text w="45">Biblioteca</ui-text></div>
${[['Aristas',33],['Atributos',44],['Dinámico',42],['Operador',45.5],['Topología',46]].map(([n,w])=>`<tree-item><ui-icon n="sfold"></ui-icon><ui-text w="${w}">${n}</ui-text></tree-item>`).join('')}<tree-item last><ui-icon n="sfold"></ui-icon><ui-text w="101">Consultas guardadas</ui-text></tree-item></div>
<div class="q"><div class="root" style="padding-left:2px;gap:9px"><ui-icon n="funnel"></ui-icon><ui-text w="47">Consultas</ui-text></div><tree-item last big><ui-icon n="target"></ui-icon><ui-text f="ti" w="94">Arrastrar filtro aquí</ui-text></tree-item></div>
<div class="foot"><push-button off style="width:97px;gap:4px;padding-right:5px"><ui-icon n="hatch"></ui-icon><ui-text w="53.500" style="color:#8a8a8a">Seleccionar</ui-text></push-button><push-button off style="width:71px;gap:6px;padding-right:3px"><ui-icon n="gplay"></ui-icon><ui-text w="28" style="color:#8a8a8a">Filtrar</ui-text></push-button></div></dock-panel>`);

define('status-bar',`:host{height:24px;display:flex;align-items:center;justify-content:flex-end;padding:0 5px 1px 0}
 .p{width:200px;height:14px;border:1px solid #aaa;background:#e2e2e2;margin:0 5px 0 5px;display:flex;padding:2px 0 2px 120px}.p i{width:6px;background:#a9deb3}.p i+i{background:#74cc86}.p i+i+i{background:#2eb850}`,
`<ui-text w="105">Fruchterman Reingold</ui-text><div class="p"><i></i><i></i><i></i></div><ui-icon n="cancel"></ui-icon><ui-icon n="world" style="margin:3px 0 0 21px"></ui-icon>`);

define('gephi-app',`:host{width:1600px;height:870px;display:flex;flex-direction:column;background:#efefef}
 main{height:749px;flex:none;padding:7px 3px 0;display:grid;grid-template-columns:310px 1010px 266px;gap:4px}
 .col{display:grid;gap:4px;min-height:0}.l{grid-template-rows:296px 442px}.r{grid-template-rows:81px 657px}`,
`<window-title></window-title><menu-bar></menu-bar><mode-bar></mode-bar><workspace-tabs></workspace-tabs>
<main><div class="col l"><appearance-panel></appearance-panel><layout-panel></layout-panel></div><graph-window></graph-window><div class="col r"><context-panel></context-panel><filters-panel></filters-panel></div></main><status-bar></status-bar>`);
</script>
</body>
</html>
